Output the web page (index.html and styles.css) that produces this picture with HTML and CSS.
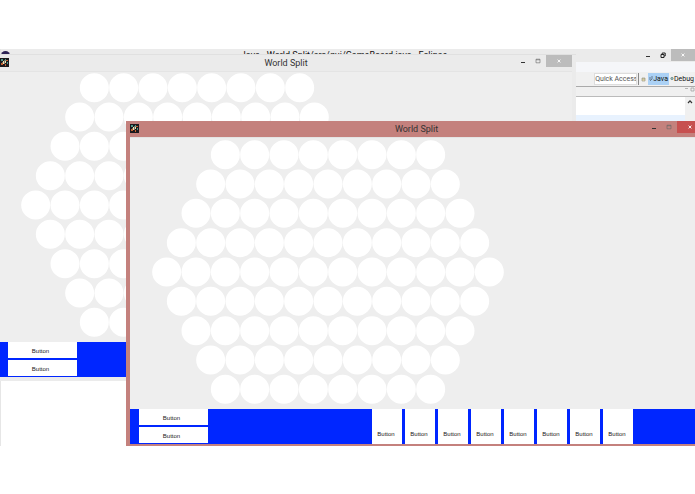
FILE: index.html
```html
<!DOCTYPE html>
<html lang="en">
<head>
<meta charset="utf-8">
<title>World Split</title>
<link rel="stylesheet" href="styles.css">
</head>
<body>
<svg class="defs" aria-hidden="true">
  <symbol id="board" viewBox="0 0 1056 792">
    <path fill="none" stroke="#fff" stroke-width="87" stroke-linecap="round" stroke-dasharray="0 88" d="M220 44H840M176 132H884M132 220H928M88 308H972M44 396H1016M88 484H972M132 572H928M176 660H884M220 748H840"/>
  </symbol>
  <symbol id="app-icon" viewBox="0 0 9 9">
    <rect width="9" height="9" fill="#1c191c"/>
    <path fill="#4f978a" d="M1 1h2v2H1zM5 1h1v2H5zM7 4h1v2H7z"/>
    <path fill="#c4602f" d="M1 5h2v2H1zM6 2h2v1H6zM5 6h1v2H5z"/>
    <path fill="#efe3ac" d="M3 3h1v3H3zM5 3h1v2H5z"/>
    <path fill="#77706b" d="M4 2h1v4H4zM2 4h1v1H2z"/>
  </symbol>
  <symbol id="min" viewBox="0 0 10 10"><path d="M3 6h4v1H3z" fill="#333"/></symbol>
  <symbol id="max" viewBox="0 0 10 10"><path d="M3 3.2h4v3.6H3zM3 3.8h4" fill="none" stroke="#666" stroke-width=".6"/></symbol>
  <symbol id="close" viewBox="0 0 10 10"><path d="M3.6 3.6l2.8 2.8M6.4 3.6L3.6 6.4" stroke="#fff" stroke-width=".9"/></symbol>
</svg>

<main class="desktop">
  <section class="ide">
    <header class="ide-title">
      <svg class="ide-logo" viewBox="0 0 10 10"><circle cx="5" cy="5" r="5" fill="#2c2255"/><path d="M1 4h8" stroke="#c08a5a"/></svg>
      <h1>Java - World Split/src/gui/GameBoard.java - Eclipse</h1>
      <div class="controls ide-controls">
        <button type="button" aria-label="Minimize"><svg><use href="#min"/></svg></button>
        <button type="button" aria-label="Restore"><svg viewBox="0 0 10 10"><path d="M3 4.5h3v3H3zM4.2 4V3h3v3h-1" fill="none" stroke="#222"/></svg></button>
        <button type="button" class="close" aria-label="Close"><svg><use href="#close"/></svg></button>
      </div>
    </header>
    <div class="ide-menu"></div>
    <div class="ide-toolbar">
      <input class="quick" type="text" placeholder="Quick Access" aria-label="Quick Access">
      <button type="button" class="open-view" aria-label="Open Perspective"><svg viewBox="0 0 5 5"><path d="M1 1h3v3H1zM1 2h3" fill="#f2e5b4" stroke="#8c8c78" stroke-width=".6"/></svg></button>
      <button type="button" class="view active"><svg viewBox="0 0 4 6"><path d="M1 1v3M3 0v3L1 5" fill="none" stroke="#567" stroke-width=".8"/></svg>Java</button>
      <button type="button" class="view"><svg viewBox="0 0 4 6"><circle cx="2" cy="2.5" r="1.2" fill="#9bb" stroke="#577" stroke-width=".6"/></svg>Debug</button>
    </div>
    <div class="ide-tabs"><svg viewBox="0 0 12 5"><path d="M2 1.5h3M8 1h3v3H8z" fill="none" stroke="#999" stroke-width=".7"/></svg></div>
    <div class="editor">
      <div class="page"><div class="current-line"></div></div>
      <div class="scroll"><svg viewBox="0 0 10 10"><path d="M3 6l2-2.2L7 6" fill="none" stroke="#333" stroke-width="1.2"/></svg></div>
    </div>
  </section>

  <section class="window back">
    <header class="titlebar">
      <svg class="app-icon"><use href="#app-icon"/></svg>
      <h2>World Split</h2>
      <div class="controls">
        <button type="button" aria-label="Minimize"><svg><use href="#min"/></svg></button>
        <button type="button" aria-label="Maximize"><svg><use href="#max"/></svg></button>
        <button type="button" class="close" aria-label="Close"><svg><use href="#close"/></svg></button>
      </div>
    </header>
    <div class="client">
      <div class="field"><svg class="board"><use href="#board"/></svg></div>
      <div class="panel">
        <div class="stack"><button type="button">Button</button><button type="button">Button</button></div>
      </div>
    </div>
  </section>

  <section class="window front">
    <header class="titlebar">
      <svg class="app-icon"><use href="#app-icon"/></svg>
      <h2>World Split</h2>
      <div class="controls">
        <button type="button" aria-label="Minimize"><svg><use href="#min"/></svg></button>
        <button type="button" aria-label="Maximize"><svg><use href="#max"/></svg></button>
        <button type="button" class="close" aria-label="Close"><svg><use href="#close"/></svg></button>
      </div>
    </header>
    <div class="client">
      <div class="field"><svg class="board"><use href="#board"/></svg></div>
      <div class="panel">
        <div class="stack"><button type="button">Button</button><button type="button">Button</button></div>
        <div class="strip">
          <button type="button">Button</button><button type="button">Button</button><button type="button">Button</button><button type="button">Button</button><button type="button">Button</button><button type="button">Button</button><button type="button">Button</button><button type="button">Button</button>
        </div>
      </div>
    </div>
  </section>
</main>
</body>
</html>
```
FILE: styles.css
```css
* { box-sizing: border-box; }

body {
  margin: 0;
  padding: 49px 0;
  background: #fff;
  font-family: Roboto, "Noto Sans", sans-serif;
  font-size: 8px;
  color: #333;
}

button {
  border: 0;
  padding: 0;
  margin: 0;
  background: none;
  font: inherit;
  color: inherit;
}

h1, h2 { margin: 0; font-size: 9px; font-weight: 400; }

svg { display: block; }

.defs { position: absolute; width: 0; height: 0; }

.desktop {
  position: relative;
  height: 397px;
  overflow: hidden;
}

/* IDE behind the game windows */
.ide {
  display: flex;
  flex-direction: column;
  height: 100%;
  border-left: 1px solid #e6e6e6;
}

.ide-title {
  display: flex;
  align-items: flex-start;
  height: 13px;
  background: #ebebeb;
}

.ide-logo { width: 9px; height: 9px; margin-top: 2px; }

.ide-title h1 {
  flex: 1;
  padding-left: 38px;
  text-align: center;
  line-height: 13px;
  color: #111;
}

.controls { display: flex; height: 12px; }

.controls button { width: 15px; height: 12px; }

.controls svg { width: 10px; height: 10px; margin: 0 auto; }

.controls .close {
  width: 26px;
  margin-left: 1px;
  background: #bcbcbc;
}

.ide-controls .close { width: 24px; }

.ide-menu { height: 10px; background: #f5f6f9; }

.ide-toolbar {
  display: flex;
  justify-content: flex-end;
  align-items: center;
  height: 15px;
  background: #f0f0f0;
  border-bottom: 1px solid #aaa;
}

.quick {
  width: 43px;
  height: 12px;
  padding: 0;
  border: 1px solid #ddd;
  background: #fff;
  font: inherit;
  font-size: 7px;
  color: #555;
}

.quick::placeholder { color: #555; opacity: 1; }

.open-view {
  width: 9px;
  height: 12px;
  margin: 0 1px;
  border-left: 1px solid #888;
}

.open-view svg { width: 5px; height: 5px; margin: 0 auto; }

.view {
  display: flex;
  align-items: center;
  height: 12px;
  padding: 0 1px;
  font-size: 7px;
  color: #111;
}

.view svg { width: 4px; height: 6px; }

.active { background: #abd1f5; }

.ide-tabs {
  display: flex;
  justify-content: flex-end;
  height: 10px;
  background: #f0f0f0;
  border-bottom: 1px solid #bbb;
}

.ide-tabs svg { width: 12px; height: 5px; }

.editor { display: flex; flex: 1; }

.page { flex: 1; padding-top: 18px; background: #fff; }

.current-line { height: 9px; background: #e8f2fe; }

.scroll { width: 10px; background: #f0f0f0; }

.scroll svg { width: 10px; height: 10px; }

/* Game windows */
.window {
  --frame: #ebebeb;
  position: absolute;
  padding: 0 4px 4px;
  background: var(--frame);
}

.back { left: -4px; right: 119px; top: 5px; border-top: 1px solid #e0e0e0; }

.front {
  --frame: #c4817d;
  left: 126px;
  right: -12px;
  top: 72px;
}

.titlebar {
  display: grid;
  grid-template-columns: 1fr auto 1fr;
  height: 16px;
}

.titlebar h2 { line-height: 16px; }

.titlebar .controls { justify-self: end; }

.app-icon { width: 9px; height: 9px; margin-top: 3px; }

.front .close { background: #c75050; }

.client { border-top: 1px solid #e4e4e4; }

.field {
  padding: 2px 22px 4px;
  background: #eee;
}

.back .field { padding: 1px 21px 5px; }

.front .field { padding-bottom: 5px; }

.board { width: 352px; height: 264px; }

.panel {
  display: flex;
  gap: 164px;
  height: 35px;
  padding-left: 9px;
  background: #0026ff;
}

.back .panel { padding-left: 8px; }

.panel button {
  background: #fff;
  font-family: "Liberation Sans", sans-serif;
  font-size: 6px;
  color: #222;
}

.stack {
  display: grid;
  grid-template-rows: 1fr 1fr;
  gap: 2px;
  width: 69px;
  padding-bottom: 1px;
}

.stack button { padding: 2px 4px 0 0; }

.strip { display: flex; gap: 3px; }

.strip button { width: 30px; padding: 14px 2px 0 0; }
```
